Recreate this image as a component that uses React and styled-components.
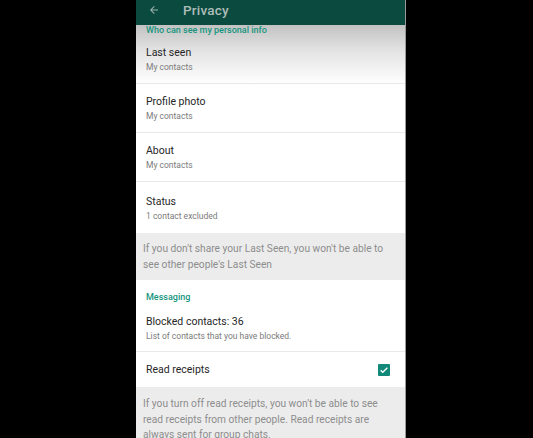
import React from 'react';
import styled, { createGlobalStyle } from 'styled-components';

const GlobalStyle = createGlobalStyle`
  html, body {
    margin: 0;
    padding: 0;
    background: #000;
  }
  body {
    font-family: Roboto, 'Liberation Sans', sans-serif;
  }
`;

const Page = styled.div`
  width: 533px;
  height: 438px;
  background: #000;
  overflow: hidden;
  display: flex;
  padding-left: 136px;
  box-sizing: border-box;
`;

const Screen = styled.div`
  width: 270px;
  height: 438px;
  background: #fff;
  display: flex;
  flex-direction: column;
  border-right: 1px solid #9a9a9a;
  box-sizing: border-box;
  overflow: hidden;

  & > * {
    flex-shrink: 0;
  }
`;

const AppBar = styled.header`
  height: 25px;
  background: #0b4a3e;
  display: flex;
  align-items: center;
  padding-left: 12px;
  gap: 23px;
`;

const Title = styled.div`
  color: #aebdb9;
  font-size: 13.5px;
  font-weight: 500;
  letter-spacing: 0.2px;
  margin-top: -6px;
`;

const Shaded = styled.div`
  background: linear-gradient(#c2c2c2 0%, #e4e4e4 45%, #ffffff 100%);
`;

const SectionLabel = styled.div`
  color: #17957e;
  font-size: 9px;
  font-weight: 500;
  padding: ${(p) => p.$pad || '0 10px'};
`;

const Row = styled.div`
  display: flex;
  align-items: center;
  justify-content: space-between;
  height: ${(p) => p.$h || 49}px;
  padding: 0 10px;
  border-bottom: ${(p) => (p.$last ? 'none' : '1px solid #e8e8e8')};
  box-sizing: border-box;
`;

const RowText = styled.div`
  display: flex;
  flex-direction: column;
  gap: 3px;
`;

const RowTitle = styled.div`
  color: #262626;
  font-size: 10.5px;
`;

const RowSub = styled.div`
  color: #7b7b7b;
  font-size: 8.5px;
`;

const Note = styled.div`
  background: #ececec;
  color: #8d8d8d;
  font-size: 10.2px;
  line-height: 15.5px;
  padding: ${(p) => p.$pad || '8px 8px 8px 7px'};
  flex: ${(p) => (p.$grow ? 1 : 'none')};
`;

const Check = styled.div`
  width: 12px;
  height: 12px;
  background: #10897a;
  border-radius: 1px;
  display: flex;
  align-items: center;
  justify-content: center;
  margin-right: 5px;
`;

const BackArrow = () => (
  <svg width="12" height="12" viewBox="0 0 24 24" style={{ marginTop: -6 }}>
    <path d="M20 11H7.83l5.59-5.59L12 4l-8 8 8 8 1.41-1.41L7.83 13H20v-2z" fill="#9fb3ae" />
  </svg>
);

const items = [
  { title: 'Profile photo', sub: 'My contacts' },
  { title: 'About', sub: 'My contacts' },
  { title: 'Status', sub: '1 contact excluded', last: true },
];

export default function App() {
  return (
    <Page>
      <GlobalStyle />
      <Screen>
        <AppBar>
          <BackArrow />
          <Title>Privacy</Title>
        </AppBar>
        <Shaded>
          <SectionLabel $pad="0 10px">Who can see my personal info</SectionLabel>
          <Row $h={49}>
            <RowText>
              <RowTitle>Last seen</RowTitle>
              <RowSub>My contacts</RowSub>
            </RowText>
          </Row>
        </Shaded>
        {items.map((it) => (
          <Row key={it.title} $last={it.last} $h={it.last ? 51 : 49}>
            <RowText>
              <RowTitle>{it.title}</RowTitle>
              <RowSub>{it.sub}</RowSub>
            </RowText>
          </Row>
        ))}
        <Note>
          If you don't share your Last Seen, you won't be able to see other people's Last Seen
        </Note>
        <SectionLabel $pad="12px 10px 2px">Messaging</SectionLabel>
        <Row $h={48}>
          <RowText>
            <RowTitle>Blocked contacts: 36</RowTitle>
            <RowSub>List of contacts that you have blocked.</RowSub>
          </RowText>
        </Row>
        <Row $h={35} $last>
          <RowTitle>Read receipts</RowTitle>
          <Check>
            <svg width="10" height="10" viewBox="0 0 24 24">
              <path d="M4 12.5l5 5L20 6.5" stroke="#fff" strokeWidth="3.2" fill="none" />
            </svg>
          </Check>
        </Row>
        <Note $grow $pad="9px 8px 0 7px">
          If you turn off read receipts, you won't be able to see read receipts from other people. Read receipts are always sent for group chats.
        </Note>
      </Screen>
    </Page>
  );
}
